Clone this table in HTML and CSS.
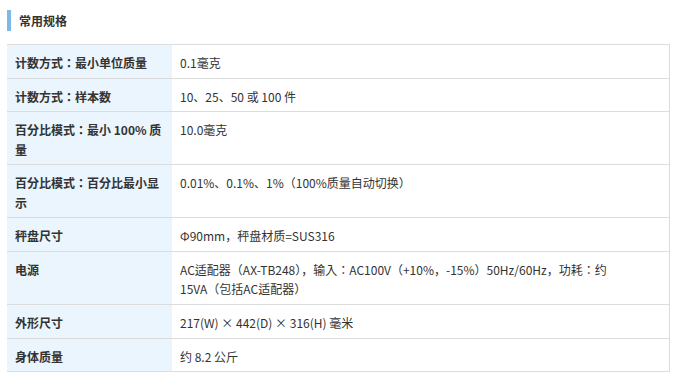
FILE: index.html
```html
<!DOCTYPE html>
<html lang="ja">
<head>
<meta charset="utf-8">
<title>常用规格</title>
<link rel="stylesheet" href="styles.css">
</head>
<body>
<div class="page">
  <h2 class="section-title">常用规格</h2>
  <table class="spec">
    <tbody>
      <tr><th>计数方式：最小单位质量</th><td>0.1毫克</td></tr>
      <tr><th>计数方式：样本数</th><td>10、25、50 或 100 件</td></tr>
      <tr><th>百分比模式：最小 100% 质量</th><td>10.0毫克</td></tr>
      <tr><th>百分比模式：百分比最小显示</th><td>0.01%、0.1%、1%（100%质量自动切换）</td></tr>
      <tr><th>秤盘尺寸</th><td>Φ90mm，秤盘材质=SUS316</td></tr>
      <tr><th>电源</th><td>AC适配器（AX-TB248），输入：AC100V（+10%，-15%）50Hz/60Hz，功耗：约 15VA（包括AC适配器）</td></tr>
      <tr><th>外形尺寸</th><td>217(W) × 442(D) × 316(H) 毫米</td></tr>
      <tr><th>身体质量</th><td>约 8.2 公斤</td></tr>
    </tbody>
  </table>
</div>
</body>
</html>
```
FILE: styles.css
```css
html, body {
  margin: 0;
  padding: 0;
  background: #ffffff;
}

body {
  font-family: "Noto Sans CJK JP", "Noto Sans CJK SC", "Noto Sans", sans-serif;
  font-size: 12px;
  color: #333333;
}

.page {
  padding: 10px 7px 0;
}

.section-title {
  margin: 0 0 13px;
  height: 21px;
  line-height: 21px;
  border-left: 4px solid #7ab9e8;
  padding-left: 8px;
  font-size: 12px;
  font-weight: bold;
  color: #333333;
}

.spec {
  width: 663px;
  border-collapse: collapse;
  table-layout: fixed;
}

.spec th,
.spec td {
  border-top: 1px solid #dcdcdc;
  border-bottom: 1px solid #dcdcdc;
  vertical-align: top;
  line-height: 19.2px;
  padding: 8px 8px 5.5px;
  text-align: left;
}

.spec th {
  width: 149px;
  background: #eaf5fe;
  font-weight: bold;
  border-left: 0;
}

.spec td {
  border-right: 1px solid #dcdcdc;
  padding-right: 48px;
  font-weight: normal;
}
```
